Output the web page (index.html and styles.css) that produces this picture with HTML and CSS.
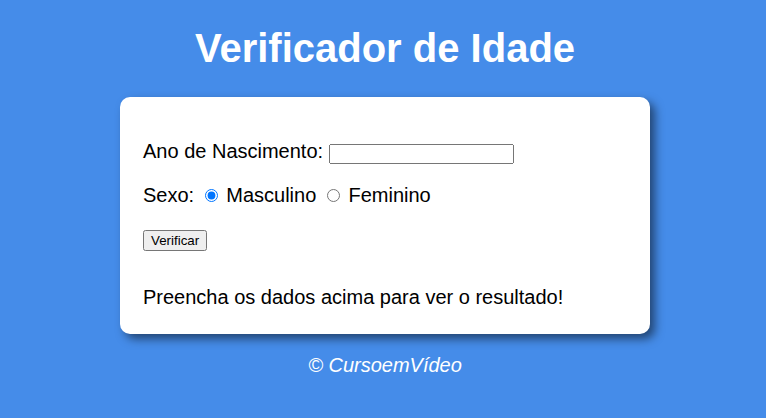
FILE: index.html
```html
<!DOCTYPE html>
<html lang="pt-br">
<head>
<meta charset="UTF-8">
<title>Verificador de Idade</title>
<link rel="stylesheet" href="styles.css">
</head>
<body>
<header class="topo">
  <h1 class="titulo">Verificador de Idade</h1>
</header>
<section class="cartao">
  <div class="form">
    <p class="linha">Ano de Nascimento: <input type="number" class="campo" name="txtano" id="txtano" min="0"></p>
    <p class="linha">Sexo: <input type="radio" class="radio" name="radsex" id="mas" checked> <label for="mas">Masculino</label> <input type="radio" class="radio" name="radsex" id="fem"> <label for="fem">Feminino</label></p>
    <input type="button" class="botao" value="Verificar">
  </div>
  <div class="res">Preencha os dados acima para ver o resultado!</div>
</section>
<footer class="rodape">
  <p class="copy">&copy; CursoemVídeo</p>
</footer>
</body>
</html>
```
FILE: styles.css
```css
body {
  background: #458ce9;
  font: normal 20px "Liberation Sans", Arial, sans-serif;
  margin: 8px 8px 8px 12px;
}
.topo {
  color: white;
  text-align: center;
}
.titulo {
  font-size: 40px;
  margin: 18px 0 26px;
}
.cartao {
  background: white;
  border-radius: 10px;
  padding: 23px 23px 25px;
  width: 484px;
  margin: auto;
  box-shadow: 5px 5px 10px rgba(0, 0, 0, 0.5);
}
.linha {
  margin: 20px 0;
}
.campo {
  width: 185px;
  height: 20px;
  box-sizing: border-box;
  font: 13.33px "Liberation Sans", Arial, sans-serif;
}
.radio {
  margin: 3px 3px 0 5px;
}
.botao {
  font: 13.33px "Liberation Sans", Arial, sans-serif;
}
.res {
  margin: 35px 0 0;
}
.rodape {
  color: white;
  text-align: center;
  font-style: italic;
}
.copy {
  margin: 20px 0;
}
```
